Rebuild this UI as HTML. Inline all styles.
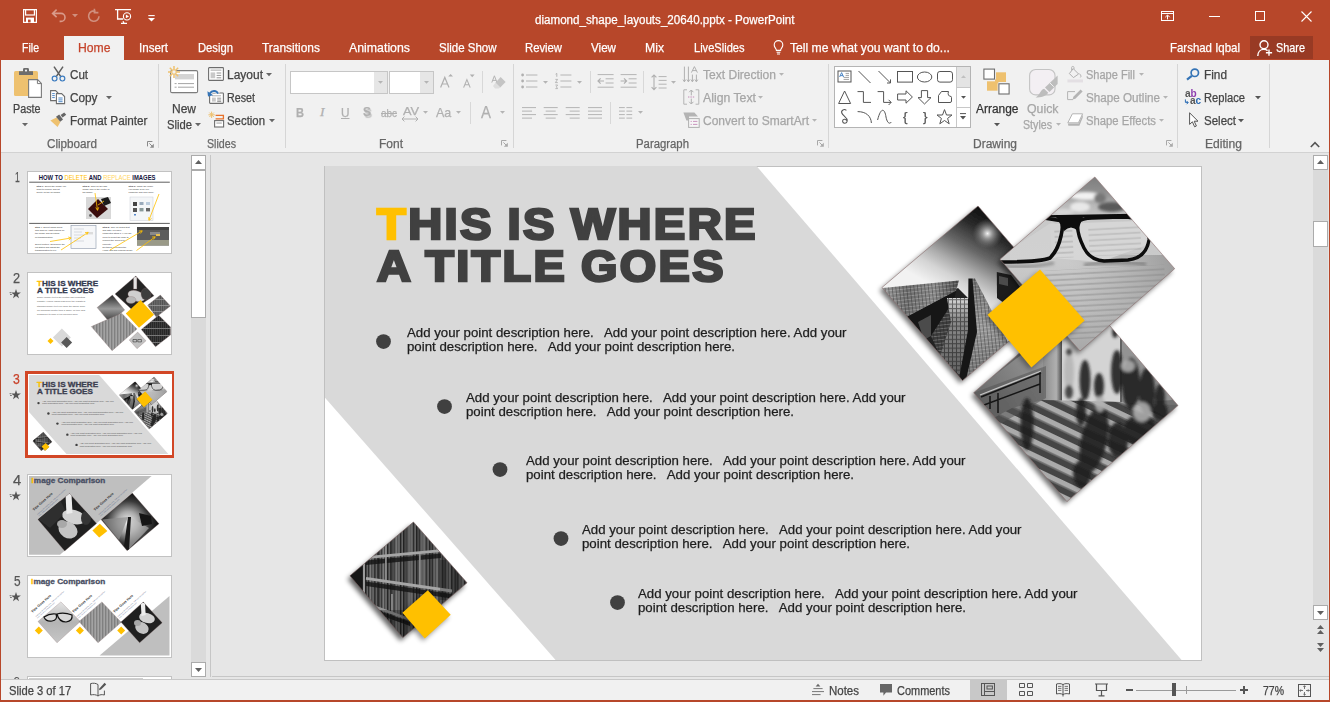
<!DOCTYPE html>
<html lang="en">
<head>
<meta charset="utf-8">
<title>diamond_shape_layouts_20640.pptx - PowerPoint</title>
<style>
*{box-sizing:border-box;margin:0;padding:0}
html,body{width:1330px;height:702px;overflow:hidden}
body{position:relative;background:#b7472a;font-family:"Liberation Sans",sans-serif;font-size:12px;color:#444}
.abs,.t,svg.i,div.b{position:absolute}
.t{white-space:pre;line-height:14px;height:14px;transform-origin:0 50%;-webkit-text-stroke:0.25px currentColor}
svg.i{overflow:visible}
#ribbon{left:1px;top:60px;width:1328px;height:92px;background:#f1f1f1}
#work{left:1px;top:152px;width:1328px;height:527px;background:#e6e6e6;border-top:1px solid #d2d2d2}
#status{left:1px;top:679px;width:1328px;height:21px;background:#f1f1f1;border-top:1px solid #c8c8c8}
.sep{position:absolute;top:64px;width:1px;height:84px;background:#d6d6d6}
</style>
</head>
<body>

<!-- ===== title bar ===== -->
<svg class="i" style="left:23px;top:9px" width="14" height="14" viewBox="0 0 14 14"><path d="M0.6 0.6H13.4V13.4H0.6Z" fill="none" stroke="#fff" stroke-width="1.2"/><rect x="2.6" y="0.6" width="8.8" height="5.4" fill="none" stroke="#fff" stroke-width="1.2"/><rect x="3" y="8.6" width="8" height="4.8" fill="#fff"/><rect x="5" y="10.6" width="2.6" height="2.8" fill="#b7472a"/></svg>
<svg class="i" style="left:51px;top:8px" width="16" height="16" viewBox="0 0 16 16"><path d="M5.6 1.6L1.6 5.4L5.6 9.2M1.8 5.4H10a4 4 0 0 1 0 8H8.6" fill="none" stroke="#d99a8a" stroke-width="1.6"/></svg>
<svg class="i" style="left:72px;top:14px" width="6" height="4" viewBox="0 0 6 4"><path d="M0 0H6L3 3.2Z" fill="#d08f7e"/></svg>
<svg class="i" style="left:86px;top:8px" width="16" height="16" viewBox="0 0 16 16"><path d="M9.6 3.2A5.2 5.2 0 1 0 13 8.2M8.4 0.8V4.6H12.4" fill="none" stroke="#d08f7e" stroke-width="1.6"/></svg>
<svg class="i" style="left:115px;top:9px" width="17" height="15" viewBox="0 0 17 15"><path d="M0 0.7H16M2.6 0.7V10H8.2M6 14.3H12M9 14.3L8 12.2" fill="none" stroke="#fff" stroke-width="1.3"/><circle cx="12" cy="7.4" r="3.6" fill="none" stroke="#fff" stroke-width="1.1"/><path d="M10.9 5.5V9.3L14 7.4Z" fill="#fff"/></svg>
<svg class="i" style="left:148px;top:15px" width="7" height="7" viewBox="0 0 7 7"><path d="M0.3 0.6H6.7" stroke="#fff" stroke-width="1.1"/><path d="M0 3H7L3.5 6.6Z" fill="#fff"/></svg>
<!-- window controls -->
<svg class="i" style="left:1161px;top:11px" width="13" height="10" viewBox="0 0 13 10"><rect x="0.5" y="0.5" width="12" height="9" fill="none" stroke="#fff"/><path d="M0.5 2.5H12.500" stroke="#fff"/><path d="M6.500 8.400V4.400M4.300 6.200L6.500 4L8.700 6.200" fill="none" stroke="#fff"/></svg>
<div class="b" style="left:1209px;top:16px;width:11px;height:1px;background:#fff"></div>
<div class="b" style="left:1255px;top:11px;width:10px;height:10px;border:1px solid #fff"></div>
<svg class="i" style="left:1301px;top:11px" width="11" height="11" viewBox="0 0 11 11"><path d="M0.5 0.5L10.5 10.5M10.5 0.5L0.5 10.5" stroke="#fff" stroke-width="1.1"/></svg>
<!-- tabs -->
<div class="b" style="left:64px;top:36px;width:60px;height:24px;background:#f1f1f1"></div>
<svg class="i" style="left:773px;top:40px" width="11" height="15" viewBox="0 0 11 15"><path d="M3.4 10.4C3.4 8.4 1.2 7.6 1.2 4.9A4.3 4.3 0 0 1 9.8 4.9C9.8 7.6 7.6 8.4 7.6 10.4Z" fill="none" stroke="#fff" stroke-width="1.1"/><path d="M3.6 12.2H7.4M4 14H7" stroke="#fff" stroke-width="1.1"/></svg>
<div class="b" style="left:1250px;top:36px;width:63px;height:23px;background:#983a24"></div>
<svg class="i" style="left:1257px;top:40px" width="16" height="17" viewBox="0 0 16 17"><circle cx="7" cy="4.800" r="4" fill="none" stroke="#fff" stroke-width="1.400"/><path d="M0.800 16C0.800 12 3.400 9.400 6.800 9.400C8.400 9.400 9.600 9.800 10.600 10.600" fill="none" stroke="#fff" stroke-width="1.400"/><path d="M12 9.600V15.800M8.900 12.700H15.100" stroke="#fff" stroke-width="1.400"/></svg>
<div class="b" id="ribbon"></div>

<!-- ===== ribbon ===== -->
<div class="sep" style="left:158px"></div><div class="sep" style="left:285px"></div><div class="sep" style="left:513px"></div><div class="sep" style="left:828px"></div><div class="sep" style="left:1177px"></div><div class="sep" style="left:1269px"></div>
<!-- clipboard group -->
<svg class="i" style="left:13px;top:66px" width="30" height="33" viewBox="0 0 30 33"><rect x="1" y="5" width="24" height="25" rx="1.5" fill="#eec16f"/><path d="M6 9V5.200H10V3.400Q10 2 11.400 2H14.600Q16 2 16 3.400V5.200H20V9Z" fill="#6d6d6d"/><circle cx="13" cy="4.600" r="1.100" fill="#f1f1f1"/><path d="M15.6 13.6H24.6L28.4 17.4V31.4H15.6Z" fill="#fff" stroke="#7a7a7a" stroke-width="1.1"/><path d="M24.4 13.8V17.6H28.2" fill="none" stroke="#7a7a7a" stroke-width="1"/></svg>
<svg class="i" style="left:22px;top:123px" width="6" height="4" viewBox="0 0 6 4"><path d="M0 0H6L3 3.2Z" fill="#666"/></svg>
<svg class="i" style="left:51px;top:66px" width="15" height="16" viewBox="0 0 15 16"><path d="M3 0.6L9.6 10.4M12 0.6L5.4 10.4" stroke="#5e5e5e" stroke-width="1.5" fill="none"/><circle cx="3.6" cy="12.6" r="2.4" fill="none" stroke="#3b7bbf" stroke-width="1.2"/><circle cx="11.4" cy="12.6" r="2.4" fill="none" stroke="#3b7bbf" stroke-width="1.2"/></svg>
<svg class="i" style="left:50px;top:90px" width="16" height="15" viewBox="0 0 16 15"><path d="M0.600 0.600H5.600L8 3V10.600H0.600Z" fill="#fff" stroke="#6d6d6d" stroke-width="1.100"/><path d="M6.400 3.600H11.600L14.600 6.600V13.600H6.400Z" fill="#fff" stroke="#6d6d6d" stroke-width="1.100"/><path d="M2.200 3.600H4.800M2.200 5.600H4.800M2.200 7.600H4.800M8.400 8H12.600M8.400 9.900H12.600M8.400 11.700H12.600" stroke="#3b7bbf" stroke-width="0.900"/></svg>
<svg class="i" style="left:106px;top:96px" width="6" height="4" viewBox="0 0 6 4"><path d="M0 0H6L3 3.2Z" fill="#666"/></svg>
<svg class="i" style="left:50px;top:112px" width="17" height="16" viewBox="0 0 17 16"><path d="M0.400 8.400L6.600 5.600L10.400 10L7.600 15Z" fill="#eec16f"/><path d="M6 4.800L9.200 2.600L13 7.400L10.200 9.800Z" fill="#666"/><path d="M10.600 3L14.200 0.400L16.200 2.800L12.600 5.600Z" fill="#666"/></svg>
<svg class="i" style="left:147px;top:141px" width="7" height="7" viewBox="0 0 7 7"><path d="M0.500 5.400V0.500H5.400" fill="none" stroke="#8a8a8a"/><path d="M2.400 2.400L5 5" stroke="#8a8a8a" fill="none"/><path d="M6.800 2.800V6.800H2.800Z" fill="#8a8a8a"/></svg>
<!-- slides group -->
<svg class="i" style="left:167px;top:65px" width="32" height="29" viewBox="0 0 32 29"><rect x="3.6" y="5.6" width="27" height="22" rx="1.4" fill="#fff" stroke="#7d7d7d" stroke-width="1.1"/><rect x="8" y="9" width="19" height="5.4" fill="#d4d4d4"/><path d="M7.6 18.6H9.6M11 18.6H27M7.6 22.2H9.6M11 22.2H27" stroke="#9a9a9a" stroke-width="0.9"/><path d="M7 1V13M1 7H13M2.8 2.8L11.2 11.2M11.2 2.8L2.8 11.2" stroke="#eec16f" stroke-width="1.5"/><circle cx="7" cy="7" r="2.2" fill="#f1f1f1" stroke="#eec16f" stroke-width="1"/></svg>
<svg class="i" style="left:195px;top:123px" width="6" height="4" viewBox="0 0 6 4"><path d="M0 0H6L3 3.2Z" fill="#666"/></svg>
<svg class="i" style="left:208px;top:67px" width="16" height="14" viewBox="0 0 16 14"><rect x="0.6" y="0.6" width="14.8" height="12.8" rx="0.6" fill="#fff" stroke="#6d6d6d" stroke-width="1.1"/><rect x="2.6" y="2.4" width="10.8" height="1.6" fill="#c9c9c9"/><rect x="2.6" y="5.4" width="4.6" height="5.8" fill="#c9c9c9"/><path d="M8.6 6H13.2M8.6 8.4H13.2M8.6 10.8H13.2" stroke="#8a8a8a" stroke-width="0.9"/></svg>
<svg class="i" style="left:265.5px;top:73px" width="6" height="4" viewBox="0 0 6 4"><path d="M0 0H6L3 3.2Z" fill="#666"/></svg>
<svg class="i" style="left:207px;top:89px" width="17" height="15" viewBox="0 0 17 15"><rect x="2.600" y="4" width="13.800" height="10.400" rx="0.600" fill="#fff" stroke="#6d6d6d" stroke-width="1.100"/><rect x="5" y="6" width="9" height="1.400" fill="#c9c9c9"/><rect x="5" y="8.600" width="3.800" height="4" fill="#c9c9c9"/><path d="M10.200 9.200H14.200M10.200 11H14.200M10.200 12.600H14.200" stroke="#8a8a8a" stroke-width="0.900"/><path d="M11 4.600C9.800 1.400 5 0.800 2.800 4.400" fill="none" stroke="#f1f1f1" stroke-width="3.800"/><path d="M11 4.600C9.800 1.400 5 0.800 2.800 4.400" fill="none" stroke="#3574b6" stroke-width="1.900"/><path d="M0.400 2.200L1 7.600L6.200 6.200Z" fill="#3574b6"/></svg>
<svg class="i" style="left:208px;top:111px" width="17" height="17" viewBox="0 0 17 17"><path d="M3.6 0.6V7M0.4 3.8H6.8M1.4 1.6L5.8 6M5.8 1.6L1.4 6" stroke="#eec16f" stroke-width="1"/><path d="M7.600 4.400H15.400V7.800H7.600" fill="none" stroke="#e8712a" stroke-width="1.300"/><rect x="6.6" y="9.6" width="9" height="6.4" fill="#fff" stroke="#6d6d6d" stroke-width="1.1"/><rect x="8.4" y="11.2" width="5.4" height="1.8" fill="#c9c9c9"/></svg>
<svg class="i" style="left:268.5px;top:119px" width="6" height="4" viewBox="0 0 6 4"><path d="M0 0H6L3 3.2Z" fill="#666"/></svg>
<!-- font group -->
<div class="b" style="left:290px;top:71px;width:97.500px;height:23px;background:#fff;border:1px solid #c6c6c6"></div>
<div class="b" style="left:374px;top:72px;width:12.500px;height:21px;background:#e6e6e6"></div>
<svg class="i" style="left:377.5px;top:81px" width="5" height="3" viewBox="0 0 5 3"><path d="M0 0H5L2.5 2.8Z" fill="#b4b4b4"/></svg>
<div class="b" style="left:388.500px;top:71px;width:45px;height:23px;background:#fff;border:1px solid #c6c6c6"></div>
<div class="b" style="left:420px;top:72px;width:12.500px;height:21px;background:#e6e6e6"></div>
<svg class="i" style="left:423.5px;top:81px" width="5" height="3" viewBox="0 0 5 3"><path d="M0 0H5L2.5 2.8Z" fill="#b4b4b4"/></svg>
<svg class="i" style="left:440px;top:73px" width="14" height="16" viewBox="0 0 14 16"><path d="M0.6 14.6L4.8 4.4L9 14.6M2 11H7.6" fill="none" stroke="#b0b0b0" stroke-width="1.2"/><path d="M8.2 3.6H13L10.6 1Z" fill="#b0b0b0"/></svg>
<svg class="i" style="left:463px;top:73px" width="13" height="16" viewBox="0 0 13 16"><path d="M0.6 14.6L3.9 6.6L7.2 14.6M1.7 11.8H6.1" fill="none" stroke="#b0b0b0" stroke-width="1.1"/><path d="M6.8 1.6H11.6L9.2 4.2Z" fill="#b0b0b0"/></svg>
<div class="b" style="left:482px;top:71px;width:1px;height:22px;background:#d8d8d8"></div>
<svg class="i" style="left:491px;top:74px" width="16" height="16" viewBox="0 0 16 16"><path d="M0.8 8.6L3.4 1.8L6 8.6M1.6 6.4H5.2" fill="none" stroke="#b4b4b4" stroke-width="1"/><path d="M9.6 3L14.6 8L9.2 13.6L4.4 8.8Z" fill="#c4c4c4"/><path d="M4.4 8.8L9.2 13.6L7.8 14.6H4L2 12Z" fill="#dedede"/></svg>
<svg class="i" style="left:501px;top:140px" width="7" height="7" viewBox="0 0 7 7"><path d="M0.500 5.400V0.500H5.400" fill="none" stroke="#a8a8a8"/><path d="M2.400 2.400L5 5" stroke="#a8a8a8" fill="none"/><path d="M6.800 2.800V6.800H2.800Z" fill="#a8a8a8"/></svg>
<div class="b" style="left:470px;top:102px;width:1px;height:22px;background:#d8d8d8"></div>
<svg class="i" style="left:401px;top:116px" width="19" height="6" viewBox="0 0 19 6"><path d="M1 3H17M3.4 0.6L1 3L3.4 5.4M14.6 0.6L17 3L14.6 5.4" fill="none" stroke="#b0b0b0" stroke-width="1"/></svg>
<svg class="i" style="left:422.5px;top:111px" width="5" height="3" viewBox="0 0 5 3"><path d="M0 0H5L2.5 2.8Z" fill="#b4b4b4"/></svg>
<svg class="i" style="left:455.5px;top:111px" width="5" height="3" viewBox="0 0 5 3"><path d="M0 0H5L2.5 2.8Z" fill="#b4b4b4"/></svg>
<svg class="i" style="left:499.5px;top:111px" width="5" height="3" viewBox="0 0 5 3"><path d="M0 0H5L2.5 2.8Z" fill="#b4b4b4"/></svg>

<!-- paragraph group -->
<svg class="i" style="left:521px;top:73px" width="17" height="16" viewBox="0 0 17 16"><circle cx="1.6" cy="2" r="1.4" fill="#b0b0b0"/><circle cx="1.6" cy="8" r="1.4" fill="#b0b0b0"/><circle cx="1.6" cy="14" r="1.4" fill="#b0b0b0"/><path d="M5 2H16.4M5 8H16.4M5 14H16.4" stroke="#b4b4b4" stroke-width="1"/></svg>
<svg class="i" style="left:543px;top:81px" width="5" height="3" viewBox="0 0 5 3"><path d="M0 0H5L2.5 2.8Z" fill="#b4b4b4"/></svg>
<svg class="i" style="left:555px;top:73px" width="17" height="16" viewBox="0 0 17 16"><path d="M5.4 2H16.4M5.4 8H16.4M5.4 14H16.4" stroke="#b4b4b4" stroke-width="1"/><path d="M0.6 1.2L1.8 0.4V3.8M0.4 6.4H2.6L0.4 9.6H2.8M0.4 12H2.6L1.4 13.8L2.6 15.6H0.4" fill="none" stroke="#b0b0b0" stroke-width="0.9"/></svg>
<svg class="i" style="left:577px;top:81px" width="5" height="3" viewBox="0 0 5 3"><path d="M0 0H5L2.5 2.8Z" fill="#b4b4b4"/></svg>
<div class="b" style="left:590px;top:71px;width:1px;height:22px;background:#d8d8d8"></div>
<svg class="i" style="left:597px;top:74px" width="17" height="14" viewBox="0 0 17 14"><path d="M0.6 0.6H16.6M8.6 4.8H16.6M8.6 9H16.6M0.6 13.2H16.6" stroke="#b4b4b4" stroke-width="1"/><path d="M1 7H7M3.6 4.4L1 7L3.6 9.6" fill="none" stroke="#b0b0b0" stroke-width="1.2"/></svg>
<svg class="i" style="left:620px;top:74px" width="17" height="14" viewBox="0 0 17 14"><path d="M0.6 0.6H16.6M8.6 4.8H16.6M8.6 9H16.6M0.6 13.2H16.6" stroke="#b4b4b4" stroke-width="1"/><path d="M0.6 7H6.6M4 4.4L6.6 7L4 9.6" fill="none" stroke="#b0b0b0" stroke-width="1.2"/></svg>
<div class="b" style="left:643px;top:71px;width:1px;height:22px;background:#d8d8d8"></div>
<svg class="i" style="left:651px;top:74px" width="16" height="17" viewBox="0 0 16 17"><path d="M3 1V15.6M0.6 3.4L3 1L5.4 3.4M0.6 13.2L3 15.6L5.4 13.2" fill="none" stroke="#b0b0b0" stroke-width="1.1"/><path d="M7.6 2.6H15.6M7.6 6.4H15.6M7.6 10.2H15.6M7.6 14H15.6" stroke="#b4b4b4" stroke-width="1"/></svg>
<svg class="i" style="left:671px;top:81px" width="5" height="3" viewBox="0 0 5 3"><path d="M0 0H5L2.5 2.8Z" fill="#b4b4b4"/></svg>
<svg class="i" style="left:683px;top:66px" width="17" height="17" viewBox="0 0 17 17"><path d="M1.4 0.6V15.6M0 13.6L1.4 15.8L2.8 13.6M5.4 0.6V15.6M4 13.6L5.4 15.8L6.8 13.6M9.4 8.6V15.6M8 13.6L9.4 15.8L10.8 13.6M13.4 8.6V15.6M12 13.6L13.4 15.8L14.8 13.6" fill="none" stroke="#b0b0b0" stroke-width="1"/><path d="M8.4 6.6L11.4 0.6L14.4 6.6M9.4 4.6H13.4" fill="none" stroke="#b0b0b0" stroke-width="1"/></svg>
<svg class="i" style="left:778.5px;top:73px" width="5" height="3" viewBox="0 0 5 3"><path d="M0 0H5L2.5 2.8Z" fill="#b4b4b4"/></svg>
<svg class="i" style="left:683px;top:89px" width="17" height="16" viewBox="0 0 17 16"><path d="M4 0.8H0.8V15.2H4M12.6 0.8H15.8V15.2H12.6" fill="none" stroke="#b4b4b4" stroke-width="1"/><path d="M8.3 1V6.4M6.2 3.2L8.3 1L10.4 3.2M8.3 15V9.6M6.2 12.8L8.3 15L10.4 12.8" fill="none" stroke="#b0b0b0" stroke-width="1"/><path d="M5 8H11.6" stroke="#c58ab8" stroke-width="1" stroke-dasharray="1.4 1"/></svg>
<svg class="i" style="left:758px;top:96px" width="5" height="3" viewBox="0 0 5 3"><path d="M0 0H5L2.5 2.8Z" fill="#b4b4b4"/></svg>
<svg class="i" style="left:683px;top:112px" width="17" height="16" viewBox="0 0 17 16"><path d="M0.4 0.4H11.4L15 4.4H6V8.4H3.4Z" fill="#b4b4b4"/><rect x="5.6" y="6.6" width="10.6" height="8.8" fill="#f6f6f6" stroke="#b0b0b0" stroke-width="1"/><path d="M7.6 9.4H8.8M10 9.4H14.4M7.6 12.4H8.8M10 12.4H14.4" stroke="#c58ab8" stroke-width="0.9"/></svg>
<svg class="i" style="left:811.5px;top:119px" width="5" height="3" viewBox="0 0 5 3"><path d="M0 0H5L2.5 2.8Z" fill="#b4b4b4"/></svg>
<svg class="i" style="left:522px;top:107px" width="81" height="12" viewBox="0 0 81 12"><path d="M0 0.6H14M0 4.1H10M0 7.6H14M0 11.1H10M21.7 0.6H35.7M23.7 4.1H33.7M21.7 7.6H35.7M23.7 11.1H33.7M43.7 0.6H57.7M47.7 4.1H57.7M43.7 7.6H57.7M47.7 11.1H57.7M66 0.6H80M66 4.1H80M66 7.6H80M66 11.1H80" stroke="#b4b4b4" stroke-width="1"/></svg>
<div class="b" style="left:610px;top:102px;width:1px;height:22px;background:#d8d8d8"></div>
<svg class="i" style="left:618.6px;top:107px" width="14" height="12" viewBox="0 0 14 12"><path d="M0 0.6H5.8M7.4 0.6H13.2M0 4.1H5.8M7.4 4.1H13.2M0 7.6H5.8M7.4 7.6H13.2M0 11.1H5.8M7.4 11.1H13.2" stroke="#b4b4b4" stroke-width="1"/></svg>
<svg class="i" style="left:637.5px;top:111px" width="5" height="3" viewBox="0 0 5 3"><path d="M0 0H5L2.5 2.8Z" fill="#b4b4b4"/></svg>
<svg class="i" style="left:817px;top:140px" width="7" height="7" viewBox="0 0 7 7"><path d="M0.500 5.400V0.500H5.400" fill="none" stroke="#a8a8a8"/><path d="M2.400 2.400L5 5" stroke="#a8a8a8" fill="none"/><path d="M6.800 2.800V6.800H2.800Z" fill="#a8a8a8"/></svg>
<!-- drawing group : shapes gallery -->
<div class="b" style="left:834px;top:66px;width:137px;height:62px;background:#fff;border:1px solid #b4b4b4"></div>
<div class="b" style="left:956px;top:67px;width:14px;height:20px;background:#e4e4e4;border-left:1px solid #c8c8c8"></div>
<div class="b" style="left:956px;top:87px;width:14px;height:20px;border-left:1px solid #c8c8c8;border-top:1px solid #c8c8c8"></div>
<div class="b" style="left:956px;top:107px;width:14px;height:20px;border-left:1px solid #c8c8c8;border-top:1px solid #c8c8c8"></div>
<svg class="i" style="left:960.5px;top:75px" width="5" height="3" viewBox="0 0 5 3"><path d="M0 3H5L2.5 0.2Z" fill="#c0c0c0"/></svg>
<svg class="i" style="left:960.5px;top:96px" width="5" height="3" viewBox="0 0 5 3"><path d="M0 0H5L2.5 2.8Z" fill="#555"/></svg>
<svg class="i" style="left:960px;top:113px" width="6" height="7" viewBox="0 0 6 7"><path d="M0 0.6H6" stroke="#555" stroke-width="1"/><path d="M0 3H6L3 6.4Z" fill="#555"/></svg>
<svg class="i" style="left:836px;top:68px" width="118" height="58" viewBox="836 68 118 58" fill="none" stroke="#555" stroke-width="1">
<rect x="838" y="71" width="13" height="11" fill="#fff"/><path d="M843.6 77.4H849M843.6 79.4H849M845.6 73.4H849M845.6 75.4H849" stroke="#8a8a8a" stroke-width="0.8"/><path d="M839.6 77L841.6 72.6L843.6 77M840.3 75.6H842.9" stroke="#3b7bbf" stroke-width="0.9"/>
<path d="M858.5 71L870.5 83"/>
<path d="M878.5 71L890.5 83M890.5 79.4V83H887"/>
<rect x="897.5" y="71.5" width="15" height="10.6"/>
<ellipse cx="924.6" cy="77" rx="7.2" ry="5"/>
<rect x="937.5" y="71.5" width="15" height="10.6" rx="2.4"/>
<path d="M838.6 103.5L844.6 91L850.6 103.5Z"/>
<path d="M857.5 91.6H863.4V102.4H871"/>
<path d="M877.6 91.6H883.6V102.4H891M888.6 99.8L891.2 102.4L888.6 105"/>
<path d="M897.6 94H906V90.8L912.4 97L906 103.2V100H897.6Z"/>
<path d="M921.4 90.6H927.6V97.6H931L924.5 104L918 97.6H921.4Z"/>
<path d="M938.500 95.500L941.500 91.500H948.500C947.500 94 948.500 96.500 951 96.500Q951.500 96.500 951.500 97.500V101Q951.500 102.500 950 102.500H938.500Z"/>
<path d="M846.400 110.400C844.400 108.600 840.800 110 841.800 113C842.800 116 847.600 117 847.200 121C846.900 123.800 843 124 842.600 121.400C842.300 119 845.600 118.400 846.600 120.600" stroke-width="1.100"/>
<path d="M857.6 111.6C866 111.6 871 116 871.4 123"/>
<path d="M877.6 120C880.6 107.6 884.6 107.600 886 117C887.400 124 890 124 891.4 122"/>
<path d="M944.500 109.600L946.500 115H952L947.600 118.400L949.200 123.800L944.500 120.500L939.800 123.800L941.400 118.400L937 115H942.500Z"/>
</svg>
<!-- arrange / quick styles -->
<svg class="i" style="left:982px;top:68px" width="28" height="27" viewBox="982 68 28 27"><rect x="996" y="72.300" width="10" height="9.700" fill="#eec16f"/><rect x="987" y="81.300" width="10.600" height="9.400" fill="#eec16f"/><rect x="995" y="79.400" width="3.400" height="3.900" fill="#eec16f"/><rect x="983.900" y="69.100" width="10.600" height="10" fill="#fff" stroke="#6d6d6d" stroke-width="1.100"/><rect x="998.900" y="83.800" width="10.200" height="10.200" fill="#fff" stroke="#6d6d6d" stroke-width="1.100"/></svg>
<svg class="i" style="left:994px;top:123px" width="6" height="4" viewBox="0 0 6 4"><path d="M0 0H6L3 3.2Z" fill="#555"/></svg>
<svg class="i" style="left:1028px;top:68px" width="30" height="30" viewBox="1028 68 30 30"><rect x="1029.600" y="69.500" width="25.400" height="25.400" rx="6" fill="#f3eff3" stroke="#c4c4c4" stroke-width="1.100"/><path d="M1057.600 75.600L1057.600 84L1049.400 92L1045 87.600Z" fill="#bdbdbd"/><path d="M1044.200 88.800L1048.200 92.800C1046 96.400 1041 97.600 1035.600 97.600C1040 95 1040 90 1044.200 88.800Z" fill="#bdbdbd"/><path d="M1049.600 82.600L1053.800 86.800" stroke="#f1f1f1" stroke-width="1"/></svg>
<svg class="i" style="left:1056px;top:123px" width="5" height="3" viewBox="0 0 5 3"><path d="M0 0H5L2.5 2.8Z" fill="#b4b4b4"/></svg>
<!-- shape fill / outline / effects -->
<svg class="i" style="left:1067px;top:66px" width="17" height="17" viewBox="0 0 17 17"><path d="M6.2 2.6L11.600 8L6.4 11.6L2.4 7.6Z" fill="none" stroke="#b0b0b0" stroke-width="1"/><path d="M4.6 4.4V1.6A1.2 1.2 0 0 1 7 1.6V3.400" fill="none" stroke="#b0b0b0" stroke-width="0.9"/><path d="M12.4 7.6C14 9.400 14.4 10.4 13.400 11.4" fill="none" stroke="#b0b0b0" stroke-width="1"/><rect x="0.4" y="13.4" width="15.6" height="3" fill="#e3dfe3"/></svg>
<svg class="i" style="left:1138.900px;top:73px" width="5" height="3" viewBox="0 0 5 3"><path d="M0 0H5L2.5 2.8Z" fill="#b4b4b4"/></svg>
<svg class="i" style="left:1067px;top:89px" width="17" height="16" viewBox="0 0 17 16"><path d="M8 2.600H0.6V10.6H6" fill="none" stroke="#b4b4b4" stroke-width="1"/><path d="M13.600 0.6L15.6 2.600L8.4 9.800L5.6 10.6L6.4 7.800Z" fill="#b4b4b4"/></svg>
<svg class="i" style="left:1163px;top:96px" width="5" height="3" viewBox="0 0 5 3"><path d="M0 0H5L2.5 2.8Z" fill="#b4b4b4"/></svg>
<svg class="i" style="left:1067px;top:113px" width="17" height="14" viewBox="0 0 17 14"><path d="M5.4 0.8H15.6L11.400 9.800H0.8Z" fill="#fff" stroke="#b4b4b4" stroke-width="1"/><path d="M0.8 10.4H11.600L15.800 1.400L15.800 4.400L12.400 12.800H1.4Z" fill="#b4b4b4"/></svg>
<svg class="i" style="left:1159.300px;top:119px" width="5" height="3" viewBox="0 0 5 3"><path d="M0 0H5L2.5 2.8Z" fill="#b4b4b4"/></svg>
<svg class="i" style="left:1166px;top:140px" width="7" height="7" viewBox="0 0 7 7"><path d="M0.500 5.400V0.500H5.400" fill="none" stroke="#a8a8a8"/><path d="M2.400 2.400L5 5" stroke="#a8a8a8" fill="none"/><path d="M6.800 2.800V6.800H2.800Z" fill="#a8a8a8"/></svg>
<!-- editing group -->
<svg class="i" style="left:1186px;top:67px" width="14" height="14" viewBox="0 0 14 14"><circle cx="8.800" cy="5.800" r="3.700" fill="none" stroke="#3574b6" stroke-width="1.700"/><path d="M5.800 8.800L1 12.600" stroke="#3574b6" stroke-width="2.200"/></svg>
<svg class="i" style="left:1184px;top:89px" width="18" height="17" viewBox="0 0 18 17"><path d="M1.400 10.4V13.400H4M2.600 12L4.2 13.600L2.600 15.200" fill="none" stroke="#2b6cb4" stroke-width="1"/></svg>
<svg class="i" style="left:1254.800px;top:96px" width="6" height="4" viewBox="0 0 6 4"><path d="M0 0H6L3 3.2Z" fill="#555"/></svg>
<svg class="i" style="left:1189px;top:112px" width="10" height="16" viewBox="0 0 10 16"><path d="M0.6 0.8V12.400L3.400 9.800L5.600 14.800L7.400 14L5.200 9.200H9Z" fill="#fff" stroke="#555" stroke-width="1"/></svg>
<svg class="i" style="left:1238px;top:119px" width="6" height="4" viewBox="0 0 6 4"><path d="M0 0H6L3 3.2Z" fill="#555"/></svg>
<svg class="i" style="left:1310px;top:141px" width="10" height="7" viewBox="0 0 10 7"><path d="M0.8 6L5 1.600L9.200 6" fill="none" stroke="#555" stroke-width="1.6"/></svg>

<!-- ===== work area ===== -->
<div class="b" id="work"></div>
<div class="b" style="left:210px;top:155px;width:1px;height:522px;background:#c6c6c6"></div>
<div class="b" style="left:212px;top:676px;width:1117px;height:1px;background:#c6c6c6"></div>
<!-- left scrollbar -->
<div class="b" style="left:191px;top:155px;width:15px;height:522px;background:#dadada"></div>
<div class="b" style="left:191px;top:155px;width:15px;height:15px;background:#fff;border:1px solid #ababab"></div>
<svg class="i" style="left:195px;top:160px" width="7" height="4" viewBox="0 0 7 4"><path d="M0 4H7L3.5 0Z" fill="#606060"/></svg>
<div class="b" style="left:191px;top:170px;width:15px;height:148px;background:#fff;border:1px solid #ababab"></div>
<div class="b" style="left:191px;top:662px;width:15px;height:15px;background:#fff;border:1px solid #ababab"></div>
<svg class="i" style="left:195px;top:668px" width="7" height="4" viewBox="0 0 7 4"><path d="M0 0H7L3.5 4Z" fill="#606060"/></svg>
<!-- right scrollbar -->
<div class="b" style="left:1313px;top:155px;width:15px;height:465px;background:#dadada"></div>
<div class="b" style="left:1313px;top:155px;width:15px;height:15px;background:#fff;border:1px solid #ababab"></div>
<svg class="i" style="left:1317px;top:160px" width="7" height="4" viewBox="0 0 7 4"><path d="M0 4H7L3.5 0Z" fill="#606060"/></svg>
<div class="b" style="left:1313px;top:221px;width:15px;height:26px;background:#fff;border:1px solid #ababab"></div>
<div class="b" style="left:1313px;top:605px;width:15px;height:15px;background:#fff;border:1px solid #ababab"></div>
<svg class="i" style="left:1317px;top:611px" width="7" height="4" viewBox="0 0 7 4"><path d="M0 0H7L3.5 4Z" fill="#606060"/></svg>
<svg class="i" style="left:1317px;top:625px" width="7" height="9" viewBox="0 0 7 9"><path d="M0 4H7L3.500 0ZM0 9H7L3.500 5Z" fill="#606060"/></svg>
<svg class="i" style="left:1317px;top:643px" width="7" height="9" viewBox="0 0 7 9"><path d="M0 0H7L3.500 4ZM0 5H7L3.500 9Z" fill="#606060"/></svg>

<!-- ===== thumbnail pane ===== -->
<svg width="0" height="0" style="position:absolute"><defs>
<g id="star"><path d="M5 0L6.200 3.500H9.900L6.900 5.700L8 9.200L5 7.100L2 9.200L3.100 5.700L0.100 3.500H3.800Z" fill="#555"/><path d="M-1.400 3.700H0.200M-0.900 5.500H0.800" stroke="#555" stroke-width="0.800"/></g>
</defs></svg>
<svg class="i" style="left:11px;top:289px" width="12" height="10"><use href="#star"/></svg>
<svg class="i" style="left:11px;top:390px" width="12" height="10"><use href="#star"/></svg>
<svg class="i" style="left:11px;top:491px" width="12" height="10"><use href="#star"/></svg>
<svg class="i" style="left:11px;top:592px" width="12" height="10"><use href="#star"/></svg>
<!-- thumb 1 -->
<div class="b" style="left:27px;top:171px;width:145px;height:83px;background:#fff;border:1px solid #c2c2c2"></div>
<svg class="i" style="left:28px;top:172px" width="143" height="81" viewBox="28 172 143 81" font-family="'Liberation Sans',sans-serif">
<text x="38.700" y="180" font-size="6.300" font-weight="bold" fill="#14143c" textLength="116.800" lengthAdjust="spacingAndGlyphs">HOW TO <tspan fill="#ffc000" font-weight="normal">DELETE</tspan> AND <tspan fill="#ffd560" font-weight="normal">REPLACE</tspan> IMAGES</text>
<path d="M29.200 182.200H169.800M29.200 223.400H169.800" stroke="#1a1a1a" stroke-width="0.700"/>
<g font-size="2.300" fill="#333">
<text x="36.500" y="187"><tspan font-weight="bold">Step 1.</tspan> Select the image you</text><text x="36.500" y="190">want to replace and hit</text><text x="36.500" y="193">delete on the keyboard.</text>
<text x="82.500" y="187"><tspan font-weight="bold">Step 2.</tspan> Click on the add</text><text x="82.500" y="190">image icon in the center of</text><text x="82.500" y="193">the shape.</text>
<text x="128.500" y="187"><tspan font-weight="bold">Step 3.</tspan> Inside the folder</text><text x="128.500" y="190">you image is on you</text><text x="128.500" y="193">computer and click open.</text>
<text x="35" y="228"><tspan font-weight="bold">Step 4.</tspan> Select image block</text><text x="35" y="231">and while by right clicking on</text><text x="35" y="234">the image and selecting</text><text x="35" y="238">fill transformation.</text><text x="35" y="244.500">Select Picture. Determine the</text><text x="35" y="247.500">left states and adjust the</text><text x="35" y="250.500">transformation to 0%.</text>
<text x="102.500" y="228"><tspan font-weight="bold">Step 5.</tspan> Only on slides that</text><text x="102.500" y="231">and after you have</text><text x="102.500" y="234">completed steps 1-4 you will</text><text x="102.500" y="238">need to Reset the slide to</text><text x="102.500" y="241">reorient the aliened to</text><text x="102.500" y="244.500">correctly.</text><text x="102.500" y="247.500">Do this by selecting the</text><text x="102.500" y="250.500">Home Tab and clicking Reset.</text>
</g>
<rect x="86" y="197" width="25" height="22" fill="#d8d8d8"/><path d="M98 199L108 209L97 218L88 209Z" fill="#3a0d0d"/><path d="M101 199L108 197L111 203L104 206Z" fill="#1c1c1c"/><circle cx="90.500" cy="215.500" r="1.400" fill="#666"/>
<rect x="130" y="197" width="23" height="23.600" fill="#f4f6f8" stroke="#c9ced6" stroke-width="0.500"/><rect x="133" y="202" width="4" height="4" fill="#444"/><rect x="139.500" y="202" width="4" height="3" fill="#9ab"/><rect x="146" y="202" width="4" height="3" fill="#bcd"/><rect x="133" y="208" width="4" height="4" fill="#555"/><rect x="139.500" y="208" width="4" height="3.400" fill="#899"/><rect x="146" y="208" width="4" height="3.400" fill="#666"/><rect x="134" y="214" width="2" height="1.500" fill="#58c"/>
<rect x="71" y="225.500" width="25" height="23" fill="#f6f7f9" stroke="#8a97a8" stroke-width="0.600"/><path d="M74 229H84M74 232H82M74 235H84M74 238H81M74 241H84" stroke="#c4c8cf" stroke-width="0.600"/><rect x="87" y="232" width="6" height="2.400" fill="#dcdcdc"/>
<rect x="137" y="227" width="32" height="18.500" fill="#5c5c5c"/><rect x="137" y="227" width="32" height="3" fill="#444"/><rect x="150" y="232" width="10" height="3" fill="#8a8a8a"/><rect x="137" y="240" width="32" height="5.500" fill="#9a9a88"/><rect x="156" y="234" width="4" height="2" fill="#e8c050"/>
<g stroke="#ffc000" stroke-width="0.800" fill="none"><path d="M95 193L97.500 210M95.800 207.500L97.500 210.400L98.800 207.200"/><path d="M104 201L98 205"/><path d="M159 194L149 220M148.800 217L148.900 220.400L151.600 218.500"/><path d="M50 241.500L71 238M68.300 237L71.200 238L68.800 240"/><path d="M61 250L88 232.500M85 232.600L88.300 232.300L86.600 235"/><path d="M110 250L142 231M139 231L142.300 230.800L140.600 233.500"/><path d="M136.500 250.500L155 237M152 237L155.300 236.800L153.600 239.500"/></g>
</svg>
<!-- thumb 2 -->
<div class="b" style="left:27px;top:272px;width:145px;height:83px;background:#fff;border:1px solid #c2c2c2"></div>
<svg class="i" style="left:28px;top:273px" width="143" height="81" viewBox="28 273 143 81" font-family="'Liberation Sans',sans-serif">
<defs><linearGradient id="t2a" x1="0" y1="0" x2="1" y2="1"><stop offset="0" stop-color="#1c1c1c"/><stop offset="0.450" stop-color="#3a3a3a"/><stop offset="0.600" stop-color="#bdbdbd"/><stop offset="0.800" stop-color="#2a2a2a"/></linearGradient>
<linearGradient id="t2b" x1="0" y1="0" x2="0" y2="1"><stop offset="0" stop-color="#2a2a2a"/><stop offset="0.500" stop-color="#9a9a9a"/><stop offset="1" stop-color="#303030"/></linearGradient>
<clipPath id="t2c"><path d="M135.800 276L154 295.800L132.300 310L115 293.900Z"/></clipPath><filter id="tb" x="-20%" y="-20%" width="140%" height="140%"><feGaussianBlur stdDeviation="0.700"/></filter><pattern id="t2w" width="3" height="6" patternUnits="userSpaceOnUse"><rect width="3" height="6" fill="#969696"/><rect width="1" height="6" fill="#808080"/><rect x="2" width="0.600" height="6" fill="#acacac"/></pattern>
<pattern id="t2k2" width="1.800" height="6" patternUnits="userSpaceOnUse"><rect width="1.800" height="6" fill="#707070"/><rect width="0.700" height="6" fill="#454545"/><rect y="5.200" width="1.800" height="0.800" fill="#9a9a9a"/></pattern><pattern id="t2k" width="2" height="7" patternUnits="userSpaceOnUse"><rect width="2" height="7" fill="#3c3c3c"/><rect width="0.700" height="7" fill="#1e1e1e"/><rect y="6" width="2" height="1" fill="#777"/></pattern></defs>
<text x="37.100" y="285.800" font-size="6.900" font-weight="bold" fill="#333a50" stroke="#333a50" stroke-width="0.300" textLength="61" lengthAdjust="spacingAndGlyphs"><tspan fill="#ffc000" stroke="#ffc000">T</tspan>HIS IS WHERE</text>
<text x="37.100" y="293.100" font-size="6.900" font-weight="bold" fill="#333a50" stroke="#333a50" stroke-width="0.300" textLength="56.500" lengthAdjust="spacingAndGlyphs">A TITLE GOES</text>
<g font-size="1.700" fill="#555"><text x="37.100" y="298" textLength="48" lengthAdjust="spacingAndGlyphs">Simply dummy text of the printing and typesetting</text><text x="37.100" y="301.900" textLength="48" lengthAdjust="spacingAndGlyphs">industry. Lorem Ipsum has been the industrys</text><text x="37.100" y="307" textLength="48" lengthAdjust="spacingAndGlyphs">standard dummy text ever since the 1500s, when</text><text x="37.100" y="310.900" textLength="48" lengthAdjust="spacingAndGlyphs">an unknown printer took a galley of type and</text><text x="37.100" y="314.900" textLength="41" lengthAdjust="spacingAndGlyphs">scrambled it to make a type specimen book.</text></g>
<path d="M61.900 328.600L70.900 337.600L61.900 346.600L52.900 337.600Z" fill="#d9d9d9"/><path d="M66.600 336.900L72.100 342.400L66.600 347.900L61.100 342.400Z" fill="#595959"/><path d="M50.500 338.100L53.500 341.100L50.500 344.100L47.500 341.100Z" fill="#ffc000"/>
<g stroke="#8b6f6f" stroke-width="0.300">
<path d="M135.800 276L154 295.800L132.300 310L115 293.900Z" fill="#242424"/><g clip-path="url(#t2c)" filter="url(#tb)"><ellipse cx="136.500" cy="296" rx="9" ry="5" fill="#cfcfcf" transform="rotate(20 136.500 296)"/><ellipse cx="131" cy="300" rx="5" ry="3.500" fill="#b8b8b8"/><rect x="133.500" y="277" width="3.400" height="12" fill="#e4e4e4"/><ellipse cx="146" cy="294" rx="5" ry="6" fill="#3c3c3c"/></g>
<path d="M112.400 295L124.700 310L109.700 322.600L97.100 307.600Z" fill="url(#t2b)"/>
<path d="M121.600 313.200L137 329L112.100 350.700L91.300 326.600Z" fill="url(#t2w)"/>
<path d="M160.300 295L170.500 306L156.300 317.100L147.600 305.300Z" fill="url(#t2k2)"/>
<path d="M158.700 315.200L170.500 327V335L155.500 346.800L141.300 329.400Z" fill="url(#t2k)"/>
<path d="M137.700 332.100L146 340.800L137 348.700L129.200 340Z" fill="#c2c2c2"/>
</g>
<path d="M133 339.500h3.600v2.400h-3.600zM137.800 339.500h3.600v2.400h-3.600z" fill="none" stroke="#333" stroke-width="0.600"/>
<path d="M140.500 300L154 314.700L139 327.800L125.800 313.600Z" fill="#ffc000"/>
</svg>
<!-- thumb 3 (selected) -->
<div class="b" style="left:24.900px;top:370.800px;width:149.300px;height:87px;background:#d24726"></div>
<div class="b" style="left:27.600px;top:373.500px;width:144px;height:81.600px;background:#fff"></div>
<svg class="i" style="left:28.900px;top:374.800px" width="142.400" height="79.100" viewBox="325 166 876 494" preserveAspectRatio="none"><rect x="325" y="166" width="876" height="494" fill="#fff"/><use href="#art"/></svg>
<svg class="i" style="left:28px;top:374px" width="144" height="81" viewBox="28 374 144 81" font-family="'Liberation Sans',sans-serif">
<text x="37.100" y="386.800" font-size="6.900" font-weight="bold" fill="#3c4050" stroke="#3c4050" stroke-width="0.300" textLength="61" lengthAdjust="spacingAndGlyphs"><tspan fill="#ffc000" stroke="#ffc000">T</tspan>HIS IS WHERE</text>
<text x="37.100" y="393.900" font-size="6.900" font-weight="bold" fill="#3c4050" stroke="#3c4050" stroke-width="0.300" textLength="55.800" lengthAdjust="spacingAndGlyphs">A TITLE GOES</text>
<g font-size="1.900" fill="#4a4a4a">
<text x="42.200" y="402.100" textLength="71.500" lengthAdjust="spacingAndGlyphs">Add your point description here.   Add your point description here. Add your</text><text x="42.200" y="404.300" textLength="53" lengthAdjust="spacingAndGlyphs">point description here.   Add your point description here.</text>
<text x="51.800" y="412.700" textLength="71.500" lengthAdjust="spacingAndGlyphs">Add your point description here.   Add your point description here. Add your</text><text x="51.800" y="414.900" textLength="53" lengthAdjust="spacingAndGlyphs">point description here.   Add your point description here.</text>
<text x="61.500" y="422.900" textLength="71.500" lengthAdjust="spacingAndGlyphs">Add your point description here.   Add your point description here. Add your</text><text x="61.500" y="425.100" textLength="53" lengthAdjust="spacingAndGlyphs">point description here.   Add your point description here.</text>
<text x="70.600" y="434" textLength="71.500" lengthAdjust="spacingAndGlyphs">Add your point description here.   Add your point description here. Add your</text><text x="70.600" y="436.200" textLength="53" lengthAdjust="spacingAndGlyphs">point description here.   Add your point description here.</text>
<text x="79.700" y="444.300" textLength="71.500" lengthAdjust="spacingAndGlyphs">Add your point description here.   Add your point description here. Add your</text><text x="79.700" y="446.500" textLength="53" lengthAdjust="spacingAndGlyphs">point description here.   Add your point description here.</text>
</g></svg>
<!-- thumb 4 -->
<div class="b" style="left:27px;top:474px;width:145px;height:83px;background:#fff;border:1px solid #c2c2c2"></div>
<svg class="i" style="left:28px;top:475px" width="143" height="81" viewBox="28 475 143 81" font-family="'Liberation Sans',sans-serif">
<defs><linearGradient id="t4a" gradientUnits="userSpaceOnUse" x1="45" y1="500" x2="90" y2="545"><stop offset="0" stop-color="#1a1a1a"/><stop offset="0.380" stop-color="#262626"/><stop offset="0.480" stop-color="#c8c8c8"/><stop offset="0.660" stop-color="#d0d0d0"/><stop offset="0.760" stop-color="#2a2a2a"/><stop offset="1" stop-color="#1c1c1c"/></linearGradient>
<radialGradient id="t4b" gradientUnits="userSpaceOnUse" cx="128" cy="522" r="30"><stop offset="0" stop-color="#f4f4f4"/><stop offset="0.350" stop-color="#a8a8a8"/><stop offset="0.700" stop-color="#3a3a3a"/><stop offset="1" stop-color="#0c0c0c"/></radialGradient></defs>
<path d="M29 476H151.600L60 554.800H29Z" fill="#bfbfbf"/>
<text x="31.600" y="482.800" font-size="7.600" font-weight="bold" fill="#4a5064" stroke="#4a5064" stroke-width="0.300" textLength="73.700" lengthAdjust="spacingAndGlyphs"><tspan fill="#ffc000" stroke="#ffc000">I</tspan>mage Comparison</text>
<g font-size="3.500" fill="#2a2a2a" font-weight="bold"><text transform="translate(34 511) rotate(-42)">Title Goes Here</text><text transform="translate(95 511) rotate(-42)">Title Goes Here</text></g>
<g font-size="1.500" fill="#56688c"><text transform="translate(37.500 515) rotate(-42)" textLength="38" lengthAdjust="spacingAndGlyphs">Add your description here. Add your description</text><text transform="translate(39 516.500) rotate(-42)" textLength="26" lengthAdjust="spacingAndGlyphs">here. Add your description here.</text><text transform="translate(99 515) rotate(-42)" textLength="38" lengthAdjust="spacingAndGlyphs">Add your description here. Add your description</text><text transform="translate(100.500 516.500) rotate(-42)" textLength="26" lengthAdjust="spacingAndGlyphs">here. Add your description here.</text></g>
<path d="M69.500 493.400L96.600 523.400L64.700 551L37.900 519.500Z" fill="#202020" stroke="#8b6f6f" stroke-width="0.300"/>
<clipPath id="t4c"><path d="M69.500 493.400L96.600 523.400L64.700 551L37.900 519.500Z"/></clipPath><g clip-path="url(#t4c)" filter="url(#tb)"><path d="M38 519L60 500L66 512L50 528Z" fill="#2e2e2e"/><ellipse cx="74" cy="517" rx="12" ry="7" fill="#d2d2d2" transform="rotate(15 74 517)"/><ellipse cx="68" cy="530" rx="10" ry="8" fill="#c4c4c4" transform="rotate(30 68 530)"/><ellipse cx="62" cy="524" rx="5" ry="4" fill="#a8a8a8"/><path d="M65.500 494L71.500 494L72.500 513L66.500 514Z" fill="#ececec"/><ellipse cx="86" cy="518" rx="5" ry="7" fill="#343434"/></g>
<path d="M132.300 493.100L159 523.700L127.100 550.700L101.100 519.500Z" fill="url(#t4b)" stroke="#8b6f6f" stroke-width="0.300"/>
<path d="M102 519.500L128 517L119 540Z" fill="#8c8c8c" opacity="0.700"/><path d="M130 517L149 528L128 550Z" fill="#bdbdbd" opacity="0.600"/><path d="M128 517L131 517L129 550L124 546Z" fill="#1a1a1a"/><path d="M139 513L151 516L152 524L142 526Z" fill="#151515"/>
<path d="M99.800 523.700L107.400 531L99.200 537.600L92.400 530.500Z" fill="#ffc000"/>
</svg>
<!-- thumb 5 -->
<div class="b" style="left:27px;top:575px;width:145px;height:83px;background:#fff;border:1px solid #c2c2c2"></div>
<svg class="i" style="left:28px;top:576px" width="143" height="81" viewBox="28 576 143 81" font-family="'Liberation Sans',sans-serif">
<defs><linearGradient id="t5a" gradientUnits="userSpaceOnUse" x1="125" y1="608" x2="160" y2="640"><stop offset="0" stop-color="#1a1a1a"/><stop offset="0.400" stop-color="#2a2a2a"/><stop offset="0.500" stop-color="#cfcfcf"/><stop offset="0.680" stop-color="#c8c8c8"/><stop offset="0.780" stop-color="#262626"/><stop offset="1" stop-color="#1c1c1c"/></linearGradient>
<linearGradient id="t5g" x1="0" y1="0" x2="0" y2="1"><stop offset="0" stop-color="#e4e4e4"/><stop offset="0.500" stop-color="#b4b4b4"/><stop offset="1" stop-color="#c6c6c6"/></linearGradient></defs>
<path d="M169.500 596.100V655.400H99.600Z" fill="#bfbfbf"/>
<text x="31.100" y="583.800" font-size="7.600" font-weight="bold" fill="#4a5064" stroke="#4a5064" stroke-width="0.300" textLength="74.100" lengthAdjust="spacingAndGlyphs"><tspan fill="#ffc000" stroke="#ffc000">I</tspan>mage Comparison</text>
<g font-size="3.500" fill="#2a2a2a" font-weight="bold"><text transform="translate(32.500 613) rotate(-42)">Title Goes Here</text><text transform="translate(73.500 613) rotate(-42)">Title Goes Here</text><text transform="translate(114.500 613) rotate(-42)">Title Goes Here</text></g>
<g font-size="1.500" fill="#56688c"><text transform="translate(36 617) rotate(-42)" textLength="38" lengthAdjust="spacingAndGlyphs">Add your description here. Add your description</text><text transform="translate(37.500 618.500) rotate(-42)" textLength="24" lengthAdjust="spacingAndGlyphs">here. Add your description here.</text><text transform="translate(77 617) rotate(-42)" textLength="38" lengthAdjust="spacingAndGlyphs">Add your description here. Add your description</text><text transform="translate(78.500 618.500) rotate(-42)" textLength="24" lengthAdjust="spacingAndGlyphs">here. Add your description here.</text><text transform="translate(118 617) rotate(-42)" textLength="38" lengthAdjust="spacingAndGlyphs">Add your description here. Add your description</text><text transform="translate(119.500 618.500) rotate(-42)" textLength="24" lengthAdjust="spacingAndGlyphs">here. Add your description here.</text></g>
<path d="M60.900 601.900L80.300 621.500L57 642.800L38 621.500Z" fill="url(#t5g)" stroke="#8b6f6f" stroke-width="0.300"/>
<path d="M44 617Q50 613 56 614Q58 620 52 621Q46 622 44 617ZM57 614Q64 612 72 615Q73 621 66 622Q59 622 57 614Z" fill="#d8d8d8" stroke="#111" stroke-width="1.200"/>
<path d="M101.900 601.900L121.200 622.300L98 642.800L79 621.500Z" fill="url(#t2w)" stroke="#8b6f6f" stroke-width="0.300"/>
<path d="M143.300 601.900L162.200 622.700L139.600 642.800L120.900 622Z" fill="#202020" stroke="#8b6f6f" stroke-width="0.300"/>
<clipPath id="t5c"><path d="M143.300 601.900L162.200 622.700L139.600 642.800L120.900 622Z"/></clipPath><g clip-path="url(#t5c)" filter="url(#tb)"><ellipse cx="147" cy="618" rx="8" ry="5" fill="#d2d2d2" transform="rotate(15 147 618)"/><ellipse cx="142" cy="628" rx="7" ry="5.500" fill="#c4c4c4" transform="rotate(30 142 628)"/><ellipse cx="137.500" cy="623" rx="3.500" ry="3" fill="#a8a8a8"/><path d="M140.800 603L145 603L145.700 615L141.500 616Z" fill="#ececec"/></g>
<path d="M38.800 626.500L42.800 630.500L38.800 634.500L34.800 630.500ZM79.900 626.500L83.900 630.500L79.900 634.500L75.900 630.500ZM121.200 626.500L125.200 630.500L121.200 634.500L117.200 630.500Z" fill="#ffc000"/>
</svg>
<!-- thumb 6 sliver -->
<div class="b" style="left:10px;top:674px;width:14px;height:5px;overflow:hidden"><span style="position:absolute;left:3px;top:-1.500px;font-size:14.500px;line-height:18px;color:#555;transform:scaleX(0.880);transform-origin:0 0">6</span></div>
<div class="b" style="left:27px;top:676px;width:145px;height:4px;background:#fff;border:1px solid #c2c2c2;border-bottom:none"></div>
<div class="b" style="left:29px;top:677.500px;width:114px;height:2px;background:#cfcfcf"></div>

<!-- ===== main slide ===== -->
<div class="b" style="left:324px;top:166px;width:878px;height:495px;background:#fff;border:1px solid #c0c0c0"></div>
<svg class="i" style="left:325px;top:167px" width="876" height="493" viewBox="325 167 876 493">
<defs>
<filter id="sh" x="-20%" y="-20%" width="140%" height="140%"><feGaussianBlur stdDeviation="2.6"/></filter>
<clipPath id="cB"><path d="M978 206L1058.5 299L962.5 380.600L882 287.500Z"/></clipPath>
<clipPath id="cG"><path d="M1094.800 177L1174.700 268.700L1080 351L1000 259.300Z"/></clipPath>
<clipPath id="cS"><path d="M1084.800 296.600L1178 405.500L1066.900 501.600L973.700 392.700Z"/></clipPath>
<clipPath id="cK"><path d="M413.400 522L467 582.800L402.800 637.600L350 575.800Z"/></clipPath>
<filter id="soft" x="-5%" y="-5%" width="110%" height="110%"><feGaussianBlur stdDeviation="0.450"/></filter>
<filter id="blur2" x="-30%" y="-30%" width="160%" height="160%"><feGaussianBlur stdDeviation="1.600"/></filter>
<linearGradient id="gSky" gradientUnits="userSpaceOnUse" x1="985" y1="212" x2="940" y2="290"><stop offset="0" stop-color="#101010"/><stop offset="0.200" stop-color="#2c2c2c"/><stop offset="0.440" stop-color="#686868"/><stop offset="0.650" stop-color="#acacac"/><stop offset="0.800" stop-color="#d4d4d4"/><stop offset="1" stop-color="#f2f2f2"/></linearGradient>
<radialGradient id="gGlow" gradientUnits="userSpaceOnUse" cx="950" cy="262" r="34"><stop offset="0" stop-color="#fff"/><stop offset="0.500" stop-color="#f2f2f2" stop-opacity="0.700"/><stop offset="1" stop-color="#e0e0e0" stop-opacity="0"/></radialGradient>
<radialGradient id="gCloud" gradientUnits="userSpaceOnUse" cx="987.500" cy="233.500" r="15"><stop offset="0" stop-color="#f4f4f4"/><stop offset="0.350" stop-color="#a8a8a8" stop-opacity="0.800"/><stop offset="1" stop-color="#707070" stop-opacity="0"/></radialGradient>
<linearGradient id="gFac" gradientUnits="userSpaceOnUse" x1="882" y1="288" x2="956" y2="292"><stop offset="0" stop-color="#9c9c9c"/><stop offset="0.350" stop-color="#6c6c6c"/><stop offset="0.700" stop-color="#8a8a8a"/><stop offset="1" stop-color="#505050"/></linearGradient>
<linearGradient id="gFac2" gradientUnits="userSpaceOnUse" x1="974" y1="280" x2="990" y2="376"><stop offset="0" stop-color="#6e6e6e"/><stop offset="0.500" stop-color="#9a9a9a"/><stop offset="1" stop-color="#6c6c6c"/></linearGradient>
<linearGradient id="gGlass" gradientUnits="userSpaceOnUse" x1="956" y1="298" x2="956" y2="384"><stop offset="0" stop-color="#d8d8d8"/><stop offset="0.250" stop-color="#8c8c8c"/><stop offset="1" stop-color="#5a5a5a"/></linearGradient>
<linearGradient id="gPaper" gradientUnits="userSpaceOnUse" x1="1092" y1="177" x2="1086" y2="351"><stop offset="0" stop-color="#7e7e7e"/><stop offset="0.090" stop-color="#909090"/><stop offset="0.160" stop-color="#b8b8b8"/><stop offset="0.240" stop-color="#c8c8c8"/><stop offset="0.500" stop-color="#cacaca"/><stop offset="0.750" stop-color="#bebebe"/><stop offset="1" stop-color="#a8a8a8"/></linearGradient>
<linearGradient id="gPaperR" gradientUnits="userSpaceOnUse" x1="1080" y1="300" x2="1176" y2="268"><stop offset="0" stop-color="#a0a0a0" stop-opacity="0"/><stop offset="1" stop-color="#8a8a8a" stop-opacity="0.700"/></linearGradient>
<linearGradient id="gWall" gradientUnits="userSpaceOnUse" x1="975" y1="395" x2="1046" y2="350"><stop offset="0" stop-color="#6a6a6a"/><stop offset="1" stop-color="#9a9a9a"/></linearGradient>
<linearGradient id="gPillar" gradientUnits="userSpaceOnUse" x1="1043" y1="360" x2="1062" y2="360"><stop offset="0" stop-color="#8a8a8a"/><stop offset="0.700" stop-color="#b0b0b0"/><stop offset="1" stop-color="#4a4a4a"/></linearGradient>
<pattern id="pGrid" width="3.600" height="3.600" patternUnits="userSpaceOnUse" patternTransform="rotate(-6)"><path d="M0 0.400H3.600" stroke="#e8e8e8" stroke-width="0.600" opacity="0.450"/><path d="M0.400 0V3.600" stroke="#1a1a1a" stroke-width="0.700" opacity="0.500"/></pattern>
<pattern id="pGrid2" width="4" height="4.400" patternUnits="userSpaceOnUse"><path d="M0 0.500H4M0.500 0V4.400" stroke="#181818" stroke-width="1" opacity="0.550"/></pattern>
<pattern id="pSteps" width="40" height="12.500" patternUnits="userSpaceOnUse"><rect width="40" height="12.500" fill="#c6c6c6"/><rect y="6" width="40" height="6.500" fill="#363636"/><rect y="4.800" width="40" height="1.200" fill="#808080"/></pattern>
<pattern id="pBooks" width="3.200" height="8" patternUnits="userSpaceOnUse"><rect width="3.200" height="8" fill="#565656"/><rect x="0" width="0.900" height="8" fill="#2a2a2a"/><rect x="2.100" width="0.600" height="8" fill="#7c7c7c"/></pattern><pattern id="pBooks2" width="13" height="8" patternUnits="userSpaceOnUse"><rect x="0" width="3" height="8" fill="#000" opacity="0.300"/><rect x="6" width="2.400" height="8" fill="#fff" opacity="0.140"/><rect x="10" width="1.600" height="8" fill="#000" opacity="0.200"/></pattern>
<pattern id="pText" width="60" height="5.400" patternUnits="userSpaceOnUse"><rect y="1.600" width="60" height="1.800" fill="#858585" opacity="0.450"/></pattern>
</defs>
<g id="art">
<!-- grey band -->
<path d="M325 166H756.500L1181.600 660H555.600L325 397.700Z" fill="#d9d9d9"/>
<!-- building photo -->
<path d="M978 206L1058.5 299L962.5 380.600L882 287.500Z" fill="#000" opacity="0.550" filter="url(#sh)" transform="translate(-2.500 3)"/>
<g clip-path="url(#cB)"><g filter="url(#soft)">
<rect x="875" y="200" width="190" height="186" fill="url(#gSky)"/>
<path d="M900 318L958 288L970 300L968 386L930 386Z" fill="#202020"/>
<circle cx="987.500" cy="233.500" r="15" fill="url(#gCloud)"/>
<path d="M996.800 272L1011 275L1024 292L1008 306L997 298Z" fill="#1d1d1d"/>
<path d="M999 276L1008 278L1008 286L999 284Z" fill="#6a6a6a" opacity="0.600"/>
<path d="M880 288.300L958.900 280.400L956 291L930.500 304.500L905 318Z" fill="url(#gFac)"/>
<path d="M880 288.300L958.900 280.400L956 291L930.500 304.500L905 318Z" fill="url(#pGrid)"/>
<path d="M905 318L930.500 304.500L956 291L953.500 301L931 336L924 340Z" fill="#161616"/>
<path d="M918 322L931 315L931 336L924 340Z" fill="#4c4c4c"/>
<path d="M931 336L953.500 301L951 322L940 356Z" fill="#3c3c3c"/>
<path d="M931 336L953.500 301L951 322L940 356Z" fill="url(#pGrid)"/>
<path d="M947 298L968 298L968 384L940 356L951 322Z" fill="url(#gGlass)"/>
<path d="M947 298L968 298L968 384L940 356L951 322Z" fill="url(#pGrid2)"/>
<path d="M972 278.500L975 278.500L1012 350L962 384L975 332Z" fill="url(#gFac2)"/>
<path d="M972 278.500L975 278.500L1012 350L962 384L975 332Z" fill="url(#pGrid)"/>
<path d="M968.400 278.500L972.500 278.500L977 332L965 384L958 384L968 330Z" fill="#181818"/>
</g></g>
<path d="M978 206L1058.5 299L962.5 380.600L882 287.500Z" fill="none" stroke="#8b6f6f" stroke-width="0.600"/>
<!-- stairs photo -->
<path d="M1084.800 296.600L1178 405.500L1066.900 501.600L973.700 392.700Z" fill="#000" opacity="0.550" filter="url(#sh)" transform="translate(-2.500 3)"/>
<g clip-path="url(#cS)"><g filter="url(#soft)">
<rect x="970" y="294" width="212" height="210" fill="#646464"/>
<path d="M970 394L1046 336L1046 398L1000 424Z" fill="url(#gWall)"/>
<path d="M1043 322L1062 322L1062 400L1043 404Z" fill="url(#gPillar)"/>
<path d="M1062 310L1120 310L1120 404L1062 404Z" fill="#d4d4d4"/>
<path d="M1085 290L1135 290L1182 405L1122 404L1122 330Z" fill="#707070"/>
<path d="M1122 340L1150 350L1172 400L1122 404Z" fill="#a2a2a2" opacity="0.700"/>
<clipPath id="cSt"><path d="M990 420L1012 408L1043 400L1122 402L1150 408L1185 430L1070 510Z"/></clipPath><g clip-path="url(#cSt)"><g transform="rotate(25.500 1060 440)"><rect x="960" y="360" width="240" height="190" fill="url(#pSteps)"/></g></g>
<path d="M990 420L1012 408L1043 400L1122 402L1150 408L1185 430L1070 510Z" fill="#6a6a6a" opacity="0.300"/>
<path d="M970 394L1046 366L1046 398L1000 424Z" fill="#555" opacity="0.550"/>
<path d="M981 397L1041 373M984 405L1040 384M998 393V413M1040 371V393M990 396V409" stroke="#161616" stroke-width="1.500" fill="none"/>
<path d="M980 395L1041 371" stroke="#c4c4c4" stroke-width="1.200"/>
<g filter="url(#blur2)">
<g fill="#1e1e1e" opacity="0.900"><ellipse cx="1085" cy="380" rx="5.500" ry="20"/><ellipse cx="1081" cy="412" rx="5" ry="14"/><ellipse cx="1099" cy="386" rx="5" ry="13"/><ellipse cx="1117" cy="372" rx="6" ry="22"/><ellipse cx="1131" cy="384" rx="9" ry="26"/><ellipse cx="1147" cy="392" rx="8" ry="24"/><ellipse cx="1160" cy="398" rx="5" ry="14"/><ellipse cx="1094" cy="440" rx="13" ry="34" transform="rotate(12 1094 440)"/><ellipse cx="1082" cy="474" rx="9" ry="14"/><ellipse cx="1027" cy="424" rx="6.500" ry="26"/><ellipse cx="1115" cy="332" rx="3" ry="6"/><ellipse cx="1140" cy="430" rx="16" ry="16"/><ellipse cx="1118" cy="440" rx="10" ry="18"/><ellipse cx="1160" cy="412" rx="8" ry="10"/></g>
<g fill="#b4b4b4" opacity="0.850"><ellipse cx="1069" cy="372" rx="5" ry="20"/><ellipse cx="1128" cy="366" rx="7" ry="6"/><ellipse cx="1142" cy="412" rx="9" ry="10"/><ellipse cx="1100" cy="404" rx="5" ry="8"/></g>
<g fill="#3a3a3a" opacity="0.900"><ellipse cx="1069" cy="352" rx="3" ry="3.500"/><ellipse cx="1069" cy="392" rx="4" ry="7"/></g>
</g>
</g></g>
<path d="M1084.800 296.600L1178 405.500L1066.900 501.600L973.700 392.700Z" fill="none" stroke="#8b6f6f" stroke-width="0.600"/>
<!-- glasses photo -->
<path d="M1094.800 177L1174.700 268.700L1080 351L1000 259.300Z" fill="#000" opacity="0.500" filter="url(#sh)" transform="translate(-2.500 3)"/>
<g clip-path="url(#cG)"><g filter="url(#soft)">
<rect x="995" y="172" width="185" height="184" fill="url(#gPaper)"/>
<rect x="995" y="255" width="185" height="100" fill="url(#gPaperR)"/>
<g filter="url(#blur2)"><ellipse cx="1086" cy="196" rx="16" ry="4" fill="#f2f2f2"/><ellipse cx="1112" cy="207" rx="14" ry="5" fill="#5a5a5a"/><ellipse cx="1080" cy="207" rx="10" ry="5" fill="#e8e8e8"/><ellipse cx="1100" cy="198" rx="6" ry="5" fill="#777"/><ellipse cx="1064" cy="212" rx="10" ry="3" fill="#d8d8d8"/></g>
<path d="M1050 224L1140 221L1150 244L1100 262L1052 258Z" fill="#d9d9d9" opacity="0.800"/>
<path d="M1010 250L1052 222L1060 226L1052 256L1010 262Z" fill="#d2d2d2" opacity="0.800"/>
<g transform="rotate(-3 1100 300)"><rect x="1046" y="268" width="120" height="70" fill="url(#pText)"/><rect x="1058" y="226" width="18" height="30" fill="url(#pText)" opacity="0.700"/><rect x="1092" y="226" width="52" height="30" fill="url(#pText)" opacity="0.600"/></g>
<path d="M1084 265Q1110 261 1146 264" stroke="#6c6c6c" stroke-width="3" fill="none" opacity="0.700" filter="url(#blur2)"/>
<path d="M1004 266Q1030 268 1054 263" stroke="#6c6c6c" stroke-width="3" fill="none" opacity="0.600" filter="url(#blur2)"/>
<path d="M1078 222Q1076 232 1084 248Q1090 260 1104 261L1128 260Q1146 258 1149 240Q1150 228 1146 222Q1138 217 1120 217L1092 218Q1082 218 1078 222Z" fill="none" stroke="#0a0a0a" stroke-width="3.400"/>
<path d="M1044 218L1060 220.500Q1064 224 1061 236Q1058 250 1050 258Q1040 262 1001 262" fill="none" stroke="#0a0a0a" stroke-width="3.600"/>
<path d="M1044 216.500L1134 215L1148 222" fill="none" stroke="#0a0a0a" stroke-width="2.600"/>
<path d="M1056 217L1083 217Q1080 224 1078 231Q1071 224 1064 231Q1062 224 1056 217Z" fill="#0a0a0a"/>
</g></g>
<path d="M1094.800 177L1174.700 268.700L1080 351L1000 259.300Z" fill="none" stroke="#8b6f6f" stroke-width="0.600"/>
<!-- big yellow diamond -->
<path d="M1040 269.400L1084.700 320.500L1031.400 367.500L987.500 314.800Z" fill="#000" opacity="0.350" filter="url(#sh)" transform="translate(-2 2.500)"/>
<path d="M1040 269.400L1084.700 320.500L1031.400 367.500L987.500 314.800Z" fill="#ffc000"/>
<!-- bookshelf photo -->
<path d="M413.400 522L467 582.800L402.800 637.600L350 575.800Z" fill="#000" opacity="0.600" filter="url(#sh)" transform="translate(-2.500 3.500)"/>
<g clip-path="url(#cK)"><g filter="url(#soft)">
<rect x="348" y="520" width="122" height="120" fill="url(#pBooks)"/>
<rect x="348" y="520" width="122" height="120" fill="url(#pBooks2)"/>
<path d="M366 560.600L441 553.600L441 558L366 565Z" fill="#141414" opacity="0.800"/>
<path d="M366 581.400L452 594L452 598.500L366 586Z" fill="#141414" opacity="0.800"/>
<path d="M374 609L410 622L410 626L374 613Z" fill="#141414" opacity="0.800"/>
<path d="M348 560L366 548V604L348 590Z" fill="#181818"/>
<path d="M364 556V604" stroke="#9a9a9a" stroke-width="2.200"/>
<path d="M385.900 540V582M419.800 552V588M392 594V614" stroke="#8a8a8a" stroke-width="1.800"/>
<path d="M366 557.600L441 550.600" stroke="#a6a6a6" stroke-width="2.800"/>
<path d="M366 578.400L452 591" stroke="#a6a6a6" stroke-width="2.800"/>
<path d="M374 606.500L410 619.500" stroke="#969696" stroke-width="2.600"/>
<path d="M440 560L470 560L470 600L440 600Z" fill="#000" opacity="0.250"/>
<path d="M380 610L420 610L420 640L380 640Z" fill="#000" opacity="0.250"/>
</g></g>
<path d="M413.400 522L467 582.800L402.800 637.600L350 575.800Z" fill="none" stroke="#6f5555" stroke-width="0.600"/>
<path d="M427.800 590.200L450.700 614.700L424.800 638.600L402.400 612.700Z" fill="#000" opacity="0.400" filter="url(#sh)" transform="translate(-2 2.500)"/>
<path d="M427.800 590.200L450.700 614.700L424.800 638.600L402.400 612.700Z" fill="#ffc000"/>
<!-- bullets -->
<g fill="#404040"><circle cx="383.500" cy="341.600" r="7.400"/><circle cx="444.500" cy="406.600" r="7.400"/><circle cx="500" cy="469.600" r="7.400"/><circle cx="561" cy="538.600" r="7.400"/><circle cx="617.500" cy="602.600" r="7.400"/></g>
</g>
</svg>

<!-- ===== status bar ===== -->
<div class="b" id="status"></div>
<svg class="i" style="left:90px;top:682px" width="17" height="15" viewBox="0 0 17 15"><path d="M8 2.600C6 1 3 1 0.600 1.600V13C3 12.400 6 12.400 8 14C10 12.400 12 12.400 14.400 13V8.600" fill="none" stroke="#555" stroke-width="1"/><path d="M8 2.600V14" stroke="#555" stroke-width="1"/><path d="M14.600 0.800L16.200 2.400L11 7.600L9 8.200L9.600 6.200Z" fill="#555"/></svg>
<svg class="i" style="left:812px;top:683px" width="12" height="13" viewBox="0 0 12 13"><path d="M3.600 3.600L6 0.800L8.400 3.600Z" fill="#666"/><path d="M1.400 5.600H10.600M0 8.600H12M0 11.600H8.600" stroke="#777" stroke-width="1"/></svg>
<svg class="i" style="left:880px;top:684px" width="12" height="12" viewBox="0 0 12 12"><path d="M0 0H12V8.600H6L3.400 11.800V8.600H0Z" fill="#666"/></svg>
<div class="b" style="left:970px;top:680px;width:37px;height:20px;background:#c8c8c8"></div>
<svg class="i" style="left:981px;top:683px" width="14" height="13" viewBox="0 0 14 13"><rect x="0.500" y="0.500" width="13" height="12" fill="none" stroke="#555"/><path d="M3.500 0.500V12.500M3.500 8.500H13.500" stroke="#555" fill="none"/><rect x="6" y="3" width="5.400" height="3" fill="none" stroke="#555"/></svg>
<svg class="i" style="left:1019px;top:683px" width="14" height="13" viewBox="0 0 14 13"><path d="M0.500 0.500H5.500V4.500H0.500ZM8.500 0.500H13.500V4.500H8.500ZM0.500 8.500H5.500V12.500H0.500ZM8.500 8.500H13.500V12.500H8.500Z" fill="none" stroke="#555"/></svg>
<svg class="i" style="left:1056px;top:683px" width="14" height="14" viewBox="0 0 14 14"><path d="M7 1.600C5.400 0.400 2.600 0.400 0.500 1V11C2.600 10.400 5.400 10.400 7 11.600C8.600 10.400 11.400 10.400 13.500 11V1C11.400 0.400 8.600 0.400 7 1.600ZM7 1.600V13.500" fill="none" stroke="#555"/><path d="M2 3.400H5.400M2 5.400H5.400M2 7.400H5.400M8.600 3.400H12M8.600 5.400H12M8.600 7.400H12" stroke="#555" stroke-width="0.800"/></svg>
<svg class="i" style="left:1095px;top:683px" width="13" height="14" viewBox="0 0 13 14"><path d="M0 1H13M1.500 1V7.500H11.500V1M6.500 7.500V12.500M3.500 12.900H9.500" fill="none" stroke="#555" stroke-width="1.200"/></svg>
<div class="b" style="left:1126px;top:689px;width:7px;height:2px;background:#555"></div>
<div class="b" style="left:1136px;top:689.500px;width:100px;height:1px;background:#9a9a9a"></div>
<div class="b" style="left:1186px;top:686px;width:1px;height:8px;background:#9a9a9a"></div>
<div class="b" style="left:1172px;top:683px;width:4px;height:13px;background:#555"></div>
<div class="b" style="left:1240px;top:689px;width:8px;height:2px;background:#555"></div>
<div class="b" style="left:1243px;top:686px;width:2px;height:8px;background:#555"></div>
<svg class="i" style="left:1298px;top:684px" width="13" height="13" viewBox="0 0 13 13"><rect x="0.500" y="0.500" width="12" height="12" fill="none" stroke="#555"/><path d="M6.500 1.600V5M6.500 11.400V8M1.600 6.500H5M11.400 6.500H8M5.300 3L6.500 1.800L7.700 3M5.300 10L6.500 11.200L7.700 10M3 5.300L1.800 6.500L3 7.700M10 5.300L11.200 6.500L10 7.700" fill="none" stroke="#555" stroke-width="0.800"/></svg>

<!-- ===== text labels ===== -->
<span class="t" style="left:534.5px;top:13.4px;font-size:12px;color:#fff;line-height:14px;height:14px;transform:scaleX(0.9676);">diamond_shape_layouts_20640.pptx - PowerPoint</span>
<span class="t" style="left:22px;top:41.1px;font-size:13px;color:#fff;line-height:14px;height:14px;transform:scaleX(0.8113);">File</span>
<span class="t" style="left:77.5px;top:41.1px;font-size:13px;color:#c5432a;line-height:14px;height:14px;transform:scaleX(0.9369);">Home</span>
<span class="t" style="left:139px;top:41.1px;font-size:13px;color:#fff;line-height:14px;height:14px;transform:scaleX(0.8919);">Insert</span>
<span class="t" style="left:197.5px;top:41.1px;font-size:13px;color:#fff;line-height:14px;height:14px;transform:scaleX(0.8649);">Design</span>
<span class="t" style="left:262px;top:41.1px;font-size:13px;color:#fff;line-height:14px;height:14px;transform:scaleX(0.9190);">Transitions</span>
<span class="t" style="left:349px;top:41.1px;font-size:13px;color:#fff;line-height:14px;height:14px;transform:scaleX(0.9485);">Animations</span>
<span class="t" style="left:438.5px;top:41.1px;font-size:13px;color:#fff;line-height:14px;height:14px;transform:scaleX(0.8840);">Slide Show</span>
<span class="t" style="left:525px;top:41.1px;font-size:13px;color:#fff;line-height:14px;height:14px;transform:scaleX(0.8680);">Review</span>
<span class="t" style="left:591px;top:41.1px;font-size:13px;color:#fff;line-height:14px;height:14px;transform:scaleX(0.8944);">View</span>
<span class="t" style="left:645px;top:41.1px;font-size:13px;color:#fff;line-height:14px;height:14px;transform:scaleX(0.9397);">Mix</span>
<span class="t" style="left:693.5px;top:41.1px;font-size:13px;color:#fff;line-height:14px;height:14px;transform:scaleX(0.8521);">LiveSlides</span>
<span class="t" style="left:790px;top:41.1px;font-size:13px;color:#fff;line-height:14px;height:14px;transform:scaleX(0.9342);">Tell me what you want to do...</span>
<span class="t" style="left:1170px;top:41.1px;font-size:13px;color:#fff;line-height:14px;height:14px;transform:scaleX(0.8805);">Farshad Iqbal</span>
<span class="t" style="left:1276px;top:41.1px;font-size:13px;color:#fff;line-height:14px;height:14px;transform:scaleX(0.8357);">Share</span>
<span class="t" style="left:12.5px;top:101.6px;font-size:12px;color:#444;line-height:14px;height:14px;transform:scaleX(0.8961);">Paste</span>
<span class="t" style="left:69.5px;top:68.3px;font-size:12px;color:#444;line-height:14px;height:14px;transform:scaleX(0.9686);">Cut</span>
<span class="t" style="left:69.5px;top:91.4px;font-size:12px;color:#444;line-height:14px;height:14px;transform:scaleX(0.9816);">Copy</span>
<span class="t" style="left:69.5px;top:114.3px;font-size:12px;color:#444;line-height:14px;height:14px;transform:scaleX(0.9766);">Format Painter</span>
<span class="t" style="left:46.6px;top:137.4px;font-size:12px;color:#666;line-height:14px;height:14px;transform:scaleX(0.9732);">Clipboard</span>
<span class="t" style="left:172px;top:101.6px;font-size:12px;color:#444;line-height:14px;height:14px;transform:scaleX(0.9993);">New</span>
<span class="t" style="left:167px;top:118.2px;font-size:12px;color:#444;line-height:14px;height:14px;transform:scaleX(0.9368);">Slide</span>
<span class="t" style="left:227px;top:68.3px;font-size:12px;color:#444;line-height:14px;height:14px;transform:scaleX(0.9991);">Layout</span>
<span class="t" style="left:227px;top:91.4px;font-size:12px;color:#444;line-height:14px;height:14px;transform:scaleX(0.8929);">Reset</span>
<span class="t" style="left:227px;top:114.3px;font-size:12px;color:#444;line-height:14px;height:14px;transform:scaleX(0.9493);">Section</span>
<span class="t" style="left:207px;top:137.4px;font-size:12px;color:#666;line-height:14px;height:14px;transform:scaleX(0.8872);">Slides</span>
<span class="t" style="left:379px;top:137.4px;font-size:12px;color:#666;line-height:14px;height:14px;transform:scaleX(0.9993);">Font</span>
<span class="t" style="left:636px;top:137.4px;font-size:12px;color:#666;line-height:14px;height:14px;transform:scaleX(0.9456);">Paragraph</span>
<span class="t" style="left:703px;top:68.3px;font-size:12px;color:#a6a6a6;line-height:14px;height:14px;transform:scaleX(1.0041);">Text Direction</span>
<span class="t" style="left:703px;top:91.4px;font-size:12px;color:#a6a6a6;line-height:14px;height:14px;transform:scaleX(1.0229);">Align Text</span>
<span class="t" style="left:703px;top:114.3px;font-size:12px;color:#a6a6a6;line-height:14px;height:14px;transform:scaleX(0.9997);">Convert to SmartArt</span>
<span class="t" style="left:975.5px;top:101.6px;font-size:12px;color:#333;line-height:14px;height:14px;transform:scaleX(0.9952);">Arrange</span>
<span class="t" style="left:1026.5px;top:101.6px;font-size:12px;color:#a6a6a6;line-height:14px;height:14px;transform:scaleX(1.0265);">Quick</span>
<span class="t" style="left:1023px;top:118.2px;font-size:12px;color:#a6a6a6;line-height:14px;height:14px;transform:scaleX(0.8872);">Styles</span>
<span class="t" style="left:1086px;top:68.3px;font-size:12px;color:#a6a6a6;line-height:14px;height:14px;transform:scaleX(0.9180);">Shape Fill</span>
<span class="t" style="left:1086px;top:91.4px;font-size:12px;color:#a6a6a6;line-height:14px;height:14px;transform:scaleX(0.9729);">Shape Outline</span>
<span class="t" style="left:1086px;top:114.3px;font-size:12px;color:#a6a6a6;line-height:14px;height:14px;transform:scaleX(0.9396);">Shape Effects</span>
<span class="t" style="left:973px;top:137.4px;font-size:12px;color:#666;line-height:14px;height:14px;transform:scaleX(0.9996);">Drawing</span>
<span class="t" style="left:1204px;top:68.3px;font-size:12px;color:#444;line-height:14px;height:14px;transform:scaleX(0.9853);">Find</span>
<span class="t" style="left:1204px;top:91.4px;font-size:12px;color:#444;line-height:14px;height:14px;transform:scaleX(0.9312);">Replace</span>
<span class="t" style="left:1204px;top:114.3px;font-size:12px;color:#444;line-height:14px;height:14px;transform:scaleX(0.9593);">Select</span>
<span class="t" style="left:1205px;top:137.4px;font-size:12px;color:#666;line-height:14px;height:14px;transform:scaleX(1.0081);">Editing</span>
<span class="t" style="left:8.5px;top:683.6px;font-size:12px;color:#444;line-height:14px;height:14px;transform:scaleX(0.9308);">Slide 3 of 17</span>
<span class="t" style="left:829px;top:683.6px;font-size:12px;color:#444;line-height:14px;height:14px;transform:scaleX(0.9567);">Notes</span>
<span class="t" style="left:897px;top:683.6px;font-size:12px;color:#444;line-height:14px;height:14px;transform:scaleX(0.9135);">Comments</span>
<span class="t" style="left:1263px;top:683.6px;font-size:12px;color:#444;line-height:14px;height:14px;transform:scaleX(0.8739);">77%</span>
<span class="t" style="left:14.5px;top:169.1px;font-size:14.5px;color:#555;line-height:17px;height:17px;transform:scaleX(0.5942);">1</span>
<span class="t" style="left:13.4px;top:269.5px;font-size:14.5px;color:#555;line-height:17px;height:17px;transform:scaleX(0.8789);">2</span>
<span class="t" style="left:13.4px;top:371.0px;font-size:14.5px;color:#c8432b;line-height:17px;height:17px;transform:scaleX(0.8418);">3</span>
<span class="t" style="left:12.6px;top:472.2px;font-size:14.5px;color:#555;line-height:17px;height:17px;transform:scaleX(1.0151);">4</span>
<span class="t" style="left:13.9px;top:573.3px;font-size:14.5px;color:#555;line-height:17px;height:17px;transform:scaleX(0.8170);">5</span>
<span class="t" style="left:407px;top:326.0px;font-size:12.6px;color:#1e1e1e;line-height:14px;height:14px;transform:scaleX(1.0498);">Add your point description here.   Add your point description here. Add your</span>
<span class="t" style="left:407px;top:340.0px;font-size:12.6px;color:#1e1e1e;line-height:14px;height:14px;transform:scaleX(1.0528);">point description here.   Add your point description here.</span>
<span class="t" style="left:466px;top:391.0px;font-size:12.6px;color:#1e1e1e;line-height:14px;height:14px;transform:scaleX(1.0498);">Add your point description here.   Add your point description here. Add your</span>
<span class="t" style="left:466px;top:405.0px;font-size:12.6px;color:#1e1e1e;line-height:14px;height:14px;transform:scaleX(1.0528);">point description here.   Add your point description here.</span>
<span class="t" style="left:526px;top:454.0px;font-size:12.6px;color:#1e1e1e;line-height:14px;height:14px;transform:scaleX(1.0498);">Add your point description here.   Add your point description here. Add your</span>
<span class="t" style="left:526px;top:468.0px;font-size:12.6px;color:#1e1e1e;line-height:14px;height:14px;transform:scaleX(1.0528);">point description here.   Add your point description here.</span>
<span class="t" style="left:582px;top:523.0px;font-size:12.6px;color:#1e1e1e;line-height:14px;height:14px;transform:scaleX(1.0498);">Add your point description here.   Add your point description here. Add your</span>
<span class="t" style="left:582px;top:537.0px;font-size:12.6px;color:#1e1e1e;line-height:14px;height:14px;transform:scaleX(1.0528);">point description here.   Add your point description here.</span>
<span class="t" style="left:638px;top:587.0px;font-size:12.6px;color:#1e1e1e;line-height:14px;height:14px;transform:scaleX(1.0498);">Add your point description here.   Add your point description here. Add your</span>
<span class="t" style="left:638px;top:601.0px;font-size:12.6px;color:#1e1e1e;line-height:14px;height:14px;transform:scaleX(1.0528);">point description here.   Add your point description here.</span>
<span class="t" style="left:296px;top:105.5px;font-size:13px;color:#b0b0b0;line-height:14px;height:14px;transform:scaleX(0.8519);font-weight:bold;">B</span>
<span class="t" style="left:320px;top:104.3px;font-size:13.5px;color:#b0b0b0;line-height:16px;height:16px;transform:scaleX(1.0000);font-style:italic;font-family:'Liberation Serif',serif;">I</span>
<span class="t" style="left:340.5px;top:105.5px;font-size:13px;color:#b0b0b0;line-height:14px;height:14px;transform:scaleX(0.9052);text-decoration:underline;">U</span>
<span class="t" style="left:363px;top:104.3px;font-size:13.5px;color:#b0b0b0;line-height:16px;height:16px;transform:scaleX(0.8873);font-weight:bold;text-shadow:1.5px 1.5px 1px #c4c4c4;">S</span>
<span class="t" style="left:380.7px;top:105.7px;font-size:11px;color:#b0b0b0;line-height:14px;height:14px;transform:scaleX(0.9014);text-decoration:line-through;">abc</span>
<span class="t" style="left:402.5px;top:104.0px;font-size:11.5px;color:#b0b0b0;line-height:14px;height:14px;transform:scaleX(1.1172);">AV</span>
<span class="t" style="left:435.7px;top:105.5px;font-size:13px;color:#b0b0b0;line-height:14px;height:14px;transform:scaleX(0.9619);">Aa</span>
<span class="t" style="left:480.7px;top:102.3px;font-size:16.5px;color:#b0b0b0;line-height:20px;height:20px;transform:scaleX(0.9078);">A</span>
<span class="t" style="left:902.5px;top:108.8px;font-size:13.5px;color:#555;line-height:16px;height:16px;transform:scaleX(0.9965);">{</span>
<span class="t" style="left:922.5px;top:108.8px;font-size:13.5px;color:#555;line-height:16px;height:16px;transform:scaleX(0.9965);">}</span>
<span class="t" style="left:1185px;top:86.4px;font-size:11px;color:#555;line-height:14px;height:14px;transform:scaleX(0.9176);font-weight:bold;-webkit-text-stroke:0;">a<span style="color:#8e3fae">b</span></span>
<span class="t" style="left:1190px;top:93.4px;font-size:11px;color:#555;line-height:14px;height:14px;transform:scaleX(0.9143);font-weight:bold;-webkit-text-stroke:0;">a<span style="color:#2b6cb4">c</span></span>
<span class="t" style="left:376.5px;top:199.0px;font-size:43.4px;color:#404040;line-height:52px;height:52px;transform:scale(1.0847,1.0000);font-weight:bold;-webkit-text-stroke:2.6px #404040;letter-spacing:2.2px;word-spacing:-1.5px;text-rendering:geometricPrecision;"><span style="color:#ffc000;-webkit-text-stroke-color:#ffc000">T</span>HIS IS WHERE</span>
<span class="t" style="left:376.5px;top:240.9px;font-size:43.4px;color:#404040;line-height:52px;height:52px;transform:scale(1.0794,1.0000);font-weight:bold;-webkit-text-stroke:2.6px #404040;letter-spacing:2.2px;word-spacing:-1.5px;text-rendering:geometricPrecision;">A TITLE GOES</span>

</body>
</html>
